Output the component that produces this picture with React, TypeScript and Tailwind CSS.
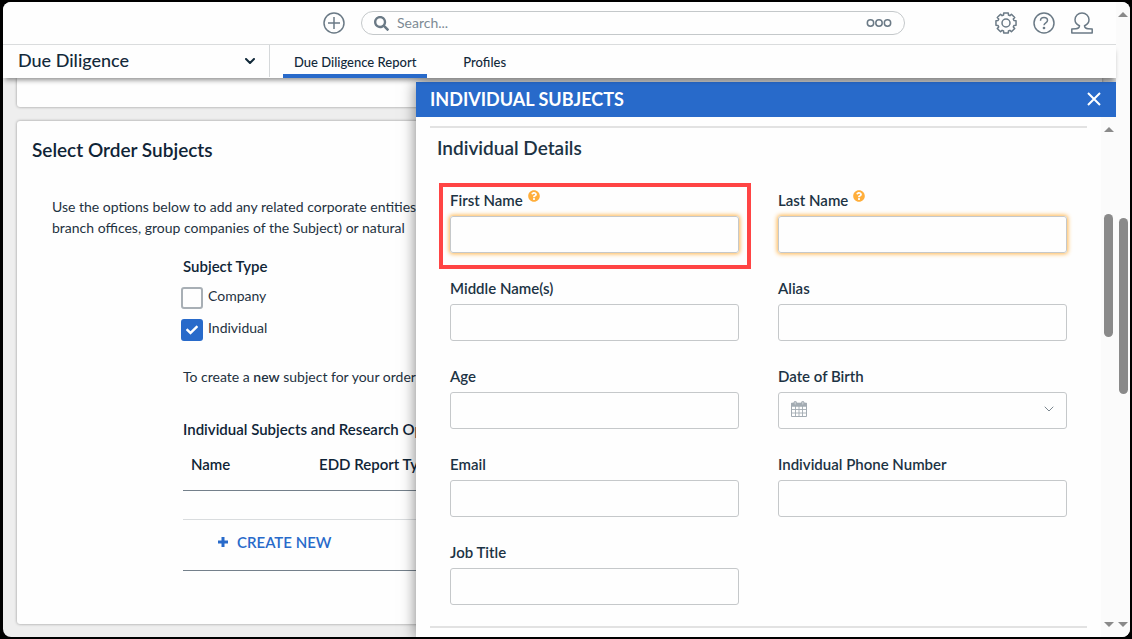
import { ReactNode } from 'react';
import { FaCheck, FaQuestionCircle, FaSearch } from 'react-icons/fa';

interface Field {
  id: string;
  label: string;
  help?: boolean;
  marked?: boolean;
  date?: boolean;
}

const FIELDS: Field[] = [
  { id: 'first-name', label: 'First Name', help: true, marked: true },
  { id: 'last-name', label: 'Last Name', help: true },
  { id: 'middle-name', label: 'Middle Name(s)' },
  { id: 'alias', label: 'Alias' },
  { id: 'age', label: 'Age' },
  { id: 'date-of-birth', label: 'Date of Birth', date: true },
  { id: 'email', label: 'Email' },
  { id: 'phone', label: 'Individual Phone Number' },
  { id: 'job-title', label: 'Job Title' },
];

// Eight teeth, four corners each: [angle offset in degrees, radius]
const TOOTH = [
  [-17, 8.3],
  [-13, 10.3],
  [13, 10.3],
  [17, 8.3],
];

const GEAR_POINTS = Array.from({ length: 8 }, (_, i) =>
  TOOTH.map(([offset, r]) => {
    const rad = ((i * 45 + offset) * Math.PI) / 180;
    return `${(11 + r * Math.cos(rad)).toFixed(2)},${(11 + r * Math.sin(rad)).toFixed(2)}`;
  }).join(' ')
).join(' ');

function Chevron({ className = '' }: { className?: string }) {
  return (
    <svg viewBox="0 0 10 6" fill="none" stroke="currentColor" className={className}>
      <path d="M1 1l4 4 4-4" strokeLinecap="round" strokeLinejoin="round" />
    </svg>
  );
}

function PlusCircleIcon() {
  return (
    <svg viewBox="0 0 22 22" fill="none" stroke="currentColor" strokeWidth="1.5" className="size-[22px]">
      <circle cx="11" cy="11" r="10" />
      <path d="M11 5v12M5 11h12" />
    </svg>
  );
}

function GearIcon() {
  return (
    <svg viewBox="0 0 22 22" fill="none" stroke="currentColor" strokeWidth="1.5" strokeLinejoin="round" className="size-[22px]">
      <polygon points={GEAR_POINTS} />
      <circle cx="11" cy="11" r="4" />
    </svg>
  );
}

function HelpIcon() {
  return (
    <svg viewBox="0 0 22 22" fill="none" stroke="currentColor" strokeWidth="1.5" className="size-[22px]">
      <circle cx="11" cy="11" r="10" />
      <path d="M7.5 8.700c0-1.900 1.400-3.100 3.500-3.100s3.500 1.100 3.500 2.800c0 2.400-3.500 2.400-3.500 4.900" />
      <circle cx="11" cy="16" r=".6" fill="currentColor" />
    </svg>
  );
}

function UserIcon() {
  return (
    <svg viewBox="0 0 22 22" fill="none" stroke="currentColor" strokeWidth="1.5" strokeLinejoin="round" className="size-[22px]">
      <path d="M8.500 13.800C5.700 12.600 4 10.400 4 7.800 4 4 7 1 11 1s7 3 7 6.800c0 2.600-1.700 4.800-4.500 6 .2 1.700 1.200 2.700 3.500 2.900l4.200.4V21H.8v-3.900l4.200-.4c2.300-.2 3.300-1.200 3.500-2.900z" />
    </svg>
  );
}

function CalendarIcon() {
  return (
    <svg viewBox="0 0 16 16" className="size-4 shrink-0 text-[#a3abb2]" fill="none" stroke="currentColor">
      <path d="M.5 2.500h15v13H.5z" strokeLinejoin="round" />
      <path d="M.5 2.200h15v3H.5z" fill="currentColor" />
      <path d="M4.500 5v10.500M8 5v10.500M11.500 5v10.500M.5 8.500h15M.5 12h15" strokeWidth=".9" />
      <rect x="3" y=".5" width="2.500" height="3.600" rx="1" fill="#c3c9cd" />
      <rect x="10.500" y=".5" width="2.500" height="3.600" rx="1" fill="#c3c9cd" />
    </svg>
  );
}

function Arrow({ down = false }: { down?: boolean }) {
  return (
    <svg viewBox="0 0 10 5" className="h-[5px] w-[10px] shrink-0 text-[#8a8a8a]" fill="currentColor">
      <path d={down ? 'M0 0h10L5 5z' : 'M0 5h10L5 0z'} />
    </svg>
  );
}

function ScrollBar({ className = '', thumb }: { className?: string; thumb: string }) {
  return (
    <div className={`flex shrink-0 flex-col items-center bg-[#fbfbfb] pt-[10px] pb-[10px] ${className}`}>
      <Arrow />
      <div className="flex-1">
        <div className={`w-[9px] rounded-full bg-[#8a8a8a] ${thumb}`} />
      </div>
      <Arrow down />
    </div>
  );
}

function IconButton({ label, children }: { label: string; children: ReactNode }) {
  return (
    <button type="button" aria-label={label} className="shrink-0 text-[#6b7a86]">
      {children}
    </button>
  );
}

function TopBar() {
  return (
    <header className="flex h-[43px] items-center border-b border-[#dadcdd] pr-[23px] pl-[320px]">
      <IconButton label="Add">
        <PlusCircleIcon />
      </IconButton>
      <div className="mr-[90px] ml-4 flex h-6 min-w-0 flex-1 items-center rounded-full border border-[#c4c8ca] px-3 text-[#6b7a86]">
        <FaSearch className="size-[15px] shrink-0" />
        <input
          type="text"
          aria-label="Search"
          placeholder="Search..."
          className="ml-2 min-w-0 flex-1 text-sm outline-none placeholder:text-[#7d8a94]"
        />
        <button type="button" aria-label="Search options">
          <svg viewBox="0 0 26 8" fill="none" stroke="currentColor" strokeWidth="1.5" className="h-2 w-[26px]">
            <circle cx="4.500" cy="4" r="3.200" />
            <circle cx="13" cy="4" r="3.200" />
            <circle cx="21.500" cy="4" r="3.200" />
          </svg>
        </button>
      </div>
      <div className="flex items-center gap-4">
        <IconButton label="Settings">
          <GearIcon />
        </IconButton>
        <IconButton label="Help">
          <HelpIcon />
        </IconButton>
        <IconButton label="Account">
          <UserIcon />
        </IconButton>
      </div>
    </header>
  );
}

function NavBar() {
  return (
    <nav className="relative z-20 flex h-[33px] bg-[#fefefe] text-[#12293a] shadow-[0_4px_5px_-2px_rgba(0,0,0,0.45)]">
      <div className="relative mb-px w-[267px] border-r border-[#d5d8da]">
        <select
          aria-label="Application"
          className="block h-[30px] w-full appearance-none pl-[15px] text-lg leading-6 font-medium outline-none"
        >
          <option>Due Diligence</option>
        </select>
        <Chevron className="pointer-events-none absolute top-[13px] right-[14px] h-[6px] w-[10px] stroke-2" />
      </div>
      <a href="#report" className="ml-[13px] flex items-center border-b-4 border-[#286aca] px-[11px] pt-1 text-[13px] font-medium">
        Due Diligence Report
      </a>
      <a href="#profiles" className="ml-[25px] flex items-center border-b-4 border-transparent px-[11px] pt-1 text-[13px] font-medium">
        Profiles
      </a>
    </nav>
  );
}

function CheckRow({ id, label, checked = false }: { id: string; label: string; checked?: boolean }) {
  return (
    <div className="flex h-[22px] items-center gap-[5px]">
      <span className="relative size-[22px]">
        <input
          id={id}
          type="checkbox"
          defaultChecked={checked}
          className="peer block size-[22px] appearance-none rounded-[3px] border-2 border-[#a8afb5] checked:border-[#286aca] checked:bg-[#286aca]"
        />
        <FaCheck className="pointer-events-none absolute top-[5px] left-[5px] hidden size-3 text-white peer-checked:block" />
      </span>
      <label htmlFor={id} className="mb-1 text-sm">
        {label}
      </label>
    </div>
  );
}

function OrderSubjects() {
  return (
    <section className="mt-[14px] rounded-[3px] bg-[#fefefe] pt-[17px] pb-[53px] shadow-[0_0_3px_rgba(0,0,0,0.4)]">
      <h2 className="pl-[15px] text-[19px] leading-6 font-semibold text-[#0f2436]">Select Order Subjects</h2>
      <p className="mt-[34px] pl-[35px] text-sm leading-[21px] whitespace-nowrap">
        Use the options below to add any related corporate entities
        <br />
        branch offices, group companies of the Subject) or natural
      </p>

      <div className="mt-[18px] mr-10 ml-[166px]">
        <h3 className="font-semibold text-[#0f2436]">Subject Type</h3>
        <div className="mt-[11px] -ml-[2px] flex flex-col gap-[10px]">
          <CheckRow id="company" label="Company" />
          <CheckRow id="individual" label="Individual" checked />
        </div>
        <p className="mt-[26px] text-sm">
          To create a <strong className="font-semibold">new</strong> subject for your order
        </p>
        <h3 className="mt-8 font-semibold text-[#0f2436]">Individual Subjects and Research Options</h3>
        <table className="w-full border-collapse text-left">
          <thead>
            <tr className="h-[51px] border-b border-[#74808b] text-[#0f2436]">
              <th className="w-[128px] pl-2 font-semibold">Name</th>
              <th className="pl-2 font-semibold">EDD Report Type</th>
            </tr>
          </thead>
          <tbody>
            <tr className="h-[29px] border-b border-[#d9dcde]">
              <td />
              <td />
            </tr>
            <tr className="h-[51px] border-b border-[#74808b]">
              <td colSpan={2} className="pb-[6px] pl-[34px]">
                <button type="button" className="flex items-center gap-2 font-semibold text-[#286aca]">
                  <svg viewBox="0 0 12 12" stroke="currentColor" strokeWidth="3" className="size-3">
                    <path d="M6 1v10M1 6h10" />
                  </svg>
                  CREATE NEW
                </button>
              </td>
            </tr>
          </tbody>
        </table>
      </div>
    </section>
  );
}

function FormField({ id, label, help, marked, date }: Field) {
  return (
    <div className="relative">
      <div className="flex h-5 gap-[5px]">
        <label htmlFor={id} className="font-semibold">
          {label}
        </label>
        {help && <FaQuestionCircle className="size-3 text-[#ffae3b]" />}
      </div>
      {date ? (
        <div className="mt-[6px] flex h-[37px] items-center rounded-[3px] border border-[#c5c8ca] px-3 pb-[3px]">
          <CalendarIcon />
          <input id={id} type="text" className="min-w-0 flex-1 px-2 outline-none" />
          <button type="button" aria-label="Open calendar" className="text-[#7b868f]">
            <Chevron className="h-[6px] w-[10px]" />
          </button>
        </div>
      ) : (
        <input
          id={id}
          type="text"
          className={`mt-[6px] block h-[37px] w-full rounded-[3px] border border-[#c5c8ca] px-3 outline-none ${
            help ? 'shadow-[0_0_4px_1px_rgba(255,174,59,0.9)]' : ''
          }`}
        />
      )}
      {marked && (
        <div className="pointer-events-none absolute -top-[7px] -right-3 -bottom-4 -left-[11px] border-4 border-[#ff4444]" />
      )}
    </div>
  );
}

function SubjectDrawer() {
  return (
    <aside className="absolute top-1 right-0 bottom-0 z-10 flex w-[700px] flex-col bg-[#fefefe] shadow-[0_0_14px_rgba(0,0,0,0.5)]">
      <div className="flex h-[35px] shrink-0 items-center justify-between bg-[#286aca] pr-[15px] pb-[2px] pl-[14px] text-white">
        <h2 className="text-lg font-bold">INDIVIDUAL SUBJECTS</h2>
        <button type="button" aria-label="Close">
          <svg viewBox="0 0 14 14" fill="none" stroke="currentColor" strokeWidth="2" className="size-[14px]">
            <path d="M1 1l12 12M13 1L1 13" />
          </svg>
        </button>
      </div>
      <div className="flex min-h-0 flex-1">
        <div className="min-w-0 flex-1 overflow-hidden px-[14px] text-[#1c3344]">
          <hr className="mt-[9px] border-t-2 border-[#e2e2e2]" />
          <h3 className="mt-2 pl-[7px] text-[19px] leading-6 font-semibold">Individual Details</h3>
          <form className="mt-[30px] grid grid-cols-2 gap-x-[39px] gap-y-[25px] px-5">
            {FIELDS.map((field) => (
              <FormField key={field.id} {...field} />
            ))}
          </form>
          <hr className="mt-[21px] border-t-2 border-[#e2e2e2]" />
        </div>
        <ScrollBar className="w-[15px]" thumb="mt-[82px] h-[123px]" />
      </div>
    </aside>
  );
}

export default function App() {
  return (
    <div className="h-screen bg-black pt-[2px] pr-[2px] pb-[2px] pl-[3px] font-['Lato',sans-serif] text-[15px] leading-5 text-[#1f3241]">
      <div className="flex h-full overflow-hidden rounded-lg bg-[#eeeeee]">
        <div className="flex min-w-0 flex-1 flex-col">
          <div className="bg-[#fefefe]">
            <TopBar />
            <NavBar />
          </div>
          <div className="relative min-h-0 flex-1 overflow-hidden">
            <main className="px-[14px]">
              <div className="h-[29px] rounded-b-[3px] bg-[#fefefe] shadow-[0_0_3px_rgba(0,0,0,0.4)]" />
              <OrderSubjects />
            </main>
            <SubjectDrawer />
          </div>
        </div>
        <ScrollBar className="w-[14px]" thumb="mt-[201px] h-[176px]" />
      </div>
    </div>
  );
}
